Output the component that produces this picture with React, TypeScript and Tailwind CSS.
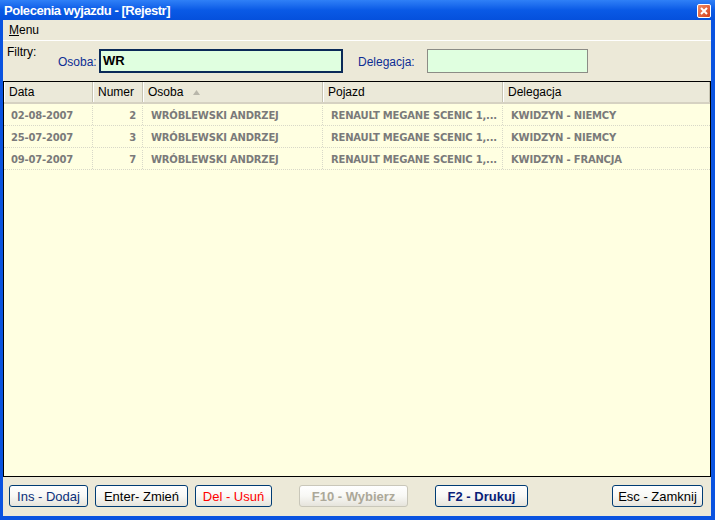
import React from "react";

const cols = [
  { label: "Data", w: "w-[89px]" },
  { label: "Numer", w: "w-[50px]" },
  { label: "Osoba", w: "w-[180px]", sort: true },
  { label: "Pojazd", w: "w-[180px]" },
  { label: "Delegacja", w: "flex-1" },
];

const rows = [
  ["02-08-2007", "2", "WRÓBLEWSKI ANDRZEJ", "RENAULT MEGANE SCENIC 1,...", "KWIDZYN - NIEMCY"],
  ["25-07-2007", "3", "WRÓBLEWSKI ANDRZEJ", "RENAULT MEGANE SCENIC 1,...", "KWIDZYN - NIEMCY"],
  ["09-07-2007", "7", "WRÓBLEWSKI ANDRZEJ", "RENAULT MEGANE SCENIC 1,...", "KWIDZYN - FRANCJA"],
];

function XpButton({
  children,
  className,
}: {
  children: React.ReactNode;
  className: string;
}) {
  return (
    <button
      className={`h-[22px] rounded-[3px] border bg-gradient-to-b from-white via-[#f8f8f5] to-[#e6e4dc] text-[13px] leading-none flex items-center justify-center ${className}`}
    >
      {children}
    </button>
  );
}

export default function App() {
  return (
    <div className="w-[715px] h-[520px] flex flex-col bg-[#0a53e0] font-['Liberation_Sans',Arial,sans-serif] overflow-hidden">
      {/* Title bar */}
      <div className="h-[20px] flex items-center justify-between bg-gradient-to-b from-[#2f80f7] via-[#0a5ae6] to-[#0550dc] pl-[4px] pr-[4px]">
        <span className="text-white font-bold text-[13px] tracking-[-0.45px] leading-none">
          Polecenia wyjazdu - [Rejestr]
        </span>
        <div className="w-[14px] h-[14px] mt-[1px] rounded-[2px] border border-white bg-gradient-to-br from-[#f08a62] to-[#d63d16] flex items-center justify-center">
          <svg width="8" height="8" viewBox="0 0 8 8">
            <path d="M1 1 L7 7 M7 1 L1 7" stroke="white" strokeWidth="2" />
          </svg>
        </div>
      </div>

      {/* Window body */}
      <div className="flex-1 flex flex-col ml-[3px] mr-[4px] mb-[4px] bg-[#ece9d8] min-h-0">
        {/* Menu */}
        <div className="h-[20px] flex items-center pl-[6px] text-[12px] text-black">
          <span>
            <span className="underline">M</span>enu
          </span>
        </div>
        <div className="h-px bg-white" />

        {/* Filters */}
        <div className="h-[40px] flex pl-[4px] text-[12px]">
          <span className="w-[51px] pt-[2px] text-black">Filtry:</span>
          <div className="flex items-start mt-[8px]">
            <span className="text-[#0d2d94] w-[41px] mt-[4px]">Osoba:</span>
            <div className="w-[244px] h-[24px] border-2 border-[#0b2a58] bg-[#e0ffe0] flex items-center pl-[2px] font-bold text-[13px] text-black">
              WR
            </div>
            <span className="text-[#0d2d94] ml-[15px] w-[69px] mt-[4px]">Delegacja:</span>
            <div className="w-[161px] h-[24px] border border-[#8c8c86] bg-[#e0ffe0]" />
          </div>
        </div>

        {/* Grid */}
        <div className="flex-1 flex flex-col border border-black bg-[#ffffe1] min-h-0">
          <div className="h-[22px] flex border-b-2 border-[#d6d2c2] bg-[#ebe9d9] text-[12px] text-black">
            {cols.map((c) => (
              <div
                key={c.label}
                className={`${c.w} flex items-center pl-[5px] border-r border-[#c7c4b3] shadow-[inset_1px_0_0_#ffffff]`}
              >
                {c.label}
                {c.sort && (
                  <svg className="ml-[10px]" width="7" height="5" viewBox="0 0 7 5">
                    <path d="M3.5 0 L7 5 L0 5 Z" fill="#b8b6aa" />
                  </svg>
                )}
              </div>
            ))}
          </div>
          {rows.map((r, i) => (
            <div
              key={i}
              className="h-[22px] flex pt-[2px] border-b border-dotted border-[#d8d8c8] text-[10px] tracking-[-0.2px] font-bold text-[#7a7a7a] font-['DejaVu_Sans',sans-serif]"
            >
              <div className="w-[89px] flex items-center pl-[7px] border-r border-dotted border-[#d8d8c8]">
                {r[0]}
              </div>
              <div className="w-[50px] flex items-center justify-end pr-[6px] border-r border-dotted border-[#d8d8c8]">
                {r[1]}
              </div>
              <div className="w-[180px] flex items-center pl-[8px] border-r border-dotted border-[#d8d8c8] whitespace-nowrap overflow-hidden">
                {r[2]}
              </div>
              <div className="w-[180px] flex items-center pl-[8px] border-r border-dotted border-[#d8d8c8] whitespace-nowrap overflow-hidden">
                {r[3]}
              </div>
              <div className="flex-1 flex items-center pl-[8px] whitespace-nowrap">
                {r[4]}
              </div>
            </div>
          ))}
        </div>

        {/* Buttons */}
        <div className="h-[39px] flex items-start pt-[8px] pl-[6px]">
          <XpButton className="w-[79px] border-[#003c74] text-[#0a2f7a]">Ins - Dodaj</XpButton>
          <XpButton className="w-[93px] ml-[7px] border-[#003c74] text-black">Enter- Zmień</XpButton>
          <XpButton className="w-[77px] ml-[7px] border-[#003c74] text-[#ff0000]">Del - Usuń</XpButton>
          <XpButton className="w-[109px] ml-[27px] border-[#c9c7ba] text-[#aca899] font-bold">F10 - Wybierz</XpButton>
          <XpButton className="w-[93px] ml-[27px] border-[#003c74] text-[#0a1e78] font-bold">F2 - Drukuj</XpButton>
          <XpButton className="w-[91px] ml-[84px] border-[#003c74] text-black">Esc - Zamknij</XpButton>
        </div>
      </div>
    </div>
  );
}
